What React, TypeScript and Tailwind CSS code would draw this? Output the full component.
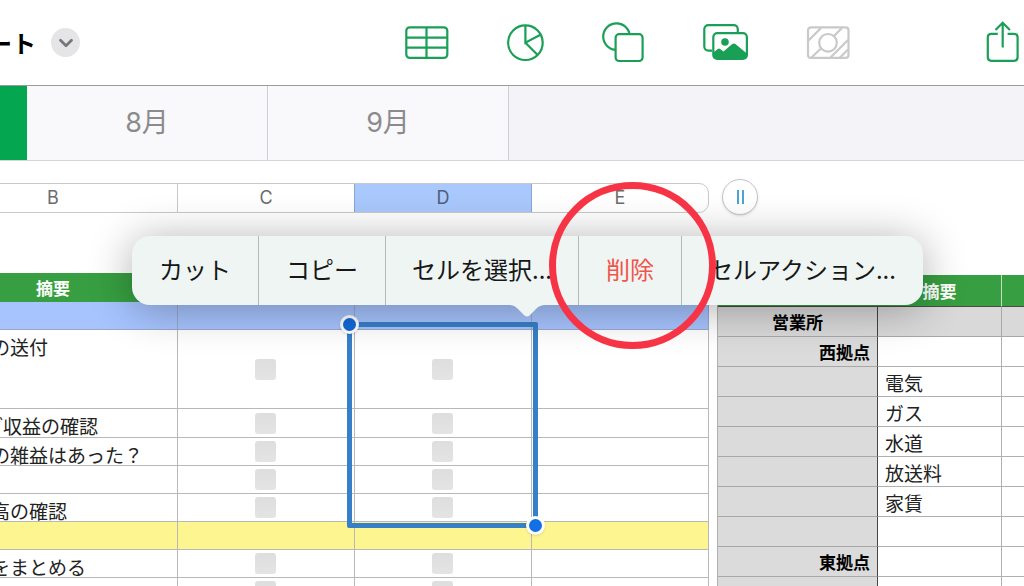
import {ChevronDown} from "lucide-react";
import type {ReactNode} from "react";

const tasks = [
  {text: "の送付", check: true, height: "h-[79px]", pad: "pl-[63px]"},
  {text: "ブ収益の確認", check: true, height: "h-[29px]", pad: "pl-14"},
  {text: "の雑益はあった？", check: true, height: "h-7", pad: "pl-[63px]"},
  {text: "", check: true, height: "h-7", pad: "pl-[63px]"},
  {text: "高の確認", check: true, height: "h-7", pad: "pl-[63px]"},
  {text: "", check: false, height: "h-7", pad: "pl-[63px]"},
  {text: "をまとめる", check: true, height: "h-7", pad: "pl-[63px]"},
  {text: "", check: true, height: "h-7", pad: "pl-[63px]"},
];

const expenses = [
  {place: "西拠点", item: ""},
  {place: "", item: "電気"},
  {place: "", item: "ガス"},
  {place: "", item: "水道"},
  {place: "", item: "放送料"},
  {place: "", item: "家賃"},
  {place: "", item: ""},
  {place: "東拠点", item: ""},
  {place: "", item: ""},
];

const menuItems = [
  {label: "カット", style: "w-[127px] border-r text-[#161818]"},
  {label: "コピー", style: "w-[127px] border-r text-[#161818]"},
  {label: "セルを選択...", style: "w-[193px] border-r text-[#161818]"},
  {label: "削除", style: "w-[103px] border-r text-[#f0544b]"},
  {label: "セルアクション...", style: "w-[241px] text-[#161818]"},
];

const ToolButton = ({label, children}: {label: string; children: ReactNode}) => (
  <button type="button" aria-label={label} className="flex w-[100px] justify-center text-[#1a9f57]">
    <svg width="50" height="49" viewBox="0 0 50 49" fill="none" stroke="currentColor" strokeWidth="2.2">
      {children}
    </svg>
  </button>
);

const Toolbar = () => (
  <header className="flex h-[85px] shrink-0 items-center">
    <div className="flex w-[376px] shrink-0 items-center gap-[15px]">
      <div className="flex w-9 justify-end overflow-hidden">
        <h1 className="shrink-0 text-2xl font-bold text-black">ート</h1>
      </div>
      <button
        type="button"
        aria-label="書類オプション"
        className="flex size-[29px] items-center justify-center rounded-full bg-[#e5e5e8] text-[#77777b]"
      >
        <ChevronDown size={22} strokeWidth={3} />
      </button>
    </div>
    <nav className="flex">
      <ToolButton label="表">
        <rect x="5.3" y="9.3" width="41" height="30.6" rx="3.5" />
        <path d="M25.5 9.3v30.6M5.3 19.6h41M5.3 29.7h41" />
      </ToolButton>
      <ToolButton label="グラフ">
        <circle cx="24.4" cy="24.7" r="17.3" />
        <path d="M24.4 7.4v17.3l15-8M24.4 24.7l12 12" />
      </ToolButton>
      <ToolButton label="図形">
        <circle cx="15.5" cy="18.6" r="13.3" />
        <rect x="14.6" y="16.2" width="27" height="26.8" rx="3.5" fill="white" />
      </ToolButton>
      <ToolButton label="メディア">
        <rect x="3.3" y="7.2" width="33.5" height="25.4" rx="4" />
        <rect x="11" y="14" width="37" height="30" rx="5" fill="white" stroke="none" />
        <rect x="12.3" y="15.2" width="33.6" height="25.8" rx="4" />
        <circle cx="24" cy="24" r="3.8" fill="currentColor" stroke="none" />
        <path
          d="M12.3 34.5l4.5-3.6q1.2-1 2.4 0l3.3 2.6 8.7-7.4q1.6-1.4 3.2 0l11.5 9.4v2.5q0 3-3 3H15.3q-3 0-3-3z"
          fill="currentColor"
          stroke="none"
        />
      </ToolButton>
      <ToolButton label="プレースホルダ">
        <g stroke="#c9c9cc">
          <rect x="7" y="9.3" width="40.5" height="30.6" rx="3" />
          <circle cx="27" cy="24.8" r="8.8" />
          <path d="M7.5 22.500L20 10M10.500 39.500l10-9.500M33 18l8-8M29.500 39.500L47 22M39 39.500l8-8" />
        </g>
      </ToolButton>
    </nav>
    <button type="button" aria-label="共有" className="ml-auto text-[#1a9f57]">
      <svg width="44" height="49" viewBox="0 0 44 49" fill="none" stroke="currentColor" strokeWidth="2.2">
        <path d="M17.8 15.8h-6.500q-3.500 0-3.500 3.500v20q0 3.500 3.500 3.500h22.800q3.500 0 3.500-3.500v-20q0-3.500-3.500-3.500h-6.500" />
        <path d="M22.7 29.5V4.8M15.5 12l7.200-7.200 7.200 7.200" />
      </svg>
    </button>
  </header>
);

const SheetTabs = () => (
  <div className="flex h-[76px] shrink-0 border-y border-t-[#9b9b9d] border-b-[#d4d4d6] bg-[#f4f4f8] font-[Inter,'Noto_Sans_CJK_JP',sans-serif] text-[27px] text-[#8b8b8d]">
    <button type="button" aria-label="7月" className="w-[27px] bg-[#04a650]" />
    <button type="button" className="w-[241px] border-r border-[#cfcfd3] bg-[#f9f9fb]">
      8月
    </button>
    <button type="button" className="w-[241px] border-r border-[#cfcfd3] bg-[#f9f9fb]">
      9月
    </button>
  </div>
);

const ColumnBar = () => (
  <div className="-ml-[72px] flex items-center gap-[13px]">
    <div className="flex h-[30px] w-[781px] shrink-0 overflow-hidden rounded-r-[10px] border border-[#c9c9c9] bg-white font-[Inter,sans-serif] text-lg leading-7 text-[#6c6c6e]">
      <div className="flex w-[249px] items-center justify-center border-r border-[#c9c9c9]">B</div>
      <div className="flex w-44 items-center justify-center">C</div>
      <div className="flex w-[178px] items-center justify-center border-x border-[#86a5d8] bg-[#a9c8fb] text-[#4f6078]">
        D
      </div>
      <div className="flex flex-1 items-center justify-center">E</div>
    </div>
    <button
      type="button"
      aria-label="列を追加"
      className="mb-[2px] flex size-9 shrink-0 items-center justify-center gap-[3px] rounded-full border border-[#c4c4c4] bg-white shadow-sm"
    >
      <span className="h-[14px] w-[2px] bg-[#4ba3d8]" />
      <span className="h-[14px] w-[2px] bg-[#4ba3d8]" />
    </button>
  </div>
);

const CheckCell = ({label, show}: {label: string; show: boolean}) => (
  <td className="border-r border-b border-[#b8b8b8] py-0 pr-[2px] pl-0">
    {show && (
      <input
        type="checkbox"
        aria-label={label}
        className="mx-auto block size-[21px] appearance-none rounded-[3px] bg-linear-to-b from-[#dedede] to-[#e4e4e4]"
      />
    )}
  </td>
);

const TaskTable = () => (
  <table className="-ml-[72px] w-[781px] shrink-0 table-fixed border-separate border-spacing-0 text-[19px] leading-[18px] text-[#222]">
    <colgroup>
      <col className="w-[250px]" />
      <col className="w-[177px]" />
      <col className="w-[177px]" />
      <col className="w-[177px]" />
    </colgroup>
    <thead>
      <tr className="h-[29px] bg-[#379f41] text-[17px] text-white">
        <th className="p-0">摘要</th>
        <th className="p-0" />
        <th className="p-0" />
        <th className="p-0" />
      </tr>
    </thead>
    <tbody>
      <tr className="h-7 bg-[#a7c4ff]">
        <td className="border-r border-b border-[#98a8cc] p-0" />
        <td className="border-r border-b border-[#98a8cc] p-0" />
        <td className="border-r border-b border-[#98a8cc] p-0" />
        <td className="border-r border-b border-[#98a8cc] p-0" />
      </tr>
      {tasks.map((task, i) => (
        <tr key={i} className={`${task.height} ${task.check ? "bg-white" : "bg-[#fdf690]"}`}>
          <td className={`border-r border-b border-[#b8b8b8] pt-2 pr-0 pb-0 align-top whitespace-nowrap ${task.pad}`}>
            {task.text}
          </td>
          <CheckCell label={`C${i + 3}`} show={task.check} />
          <CheckCell label={`D${i + 3}`} show={task.check} />
          <td className="border-r border-b border-[#b8b8b8] p-0" />
        </tr>
      ))}
    </tbody>
  </table>
);

const ExpenseTable = () => (
  <div className="mt-[2px] min-w-0 flex-1">
    <table className="w-full table-fixed border-separate border-spacing-0 border-l border-[#b0b0b0] text-[19px] leading-[18px] text-[#222]">
      <colgroup>
        <col className="w-40" />
        <col className="w-[124px]" />
        <col />
      </colgroup>
      <thead>
        <tr className="h-8 bg-[#379f41] text-[17px] text-white">
          <th className="border-b border-[#4a4a4a] p-0" />
          <th className="border-r border-b border-r-[#c4dfc6] border-b-[#4a4a4a] p-0">摘要</th>
          <th className="border-b border-[#4a4a4a] p-0" />
        </tr>
      </thead>
      <tbody>
        <tr className="h-[30px] bg-[#d9d9d9] text-[17px] text-black">
          <th className="border-r border-b border-r-[#444] border-b-[#a8a8a8] p-0">営業所</th>
          <td className="border-r border-b border-[#a8a8a8] p-0" />
          <td className="border-b border-[#a8a8a8] p-0" />
        </tr>
        {expenses.map((row, i) => (
          <tr key={i} className="h-[30px] bg-white">
            <th className="border-r border-b border-r-[#444] border-b-[#a8a8a8] bg-[#dbdbdb] py-0 pr-[7px] pl-0 text-right text-[17px] text-black">
              {row.place}
            </th>
            <td className="border-r border-b border-[#b0b0b0] pt-[2px] pr-0 pb-0 pl-[7px]">{row.item}</td>
            <td className="border-b border-[#b0b0b0] p-0" />
          </tr>
        ))}
      </tbody>
    </table>
  </div>
);

// range from the first handle (top left) to the last one (bottom right)
const Selection = () => (
  <div className="pointer-events-none absolute top-[161px] left-[347px] h-[206px] w-[191px] rounded-[2px] border-[5px] border-[#377fc8]">
    <span className="absolute -top-3 -left-3 size-[19px] rounded-full border-[3px] border-white bg-[#1369d8] shadow" />
    <span className="absolute -right-3 -bottom-3 size-[19px] rounded-full border-[3px] border-white bg-[#1370e4] shadow" />
  </div>
);

const ContextMenu = () => (
  <div className="absolute top-[75px] left-[132px] flex h-[69px] rounded-[18px] bg-[#eff5f2] shadow-[0_4px_44px_rgba(0,0,0,0.32)]">
    {menuItems.map((item) => (
      <button key={item.label} type="button" className={`border-[#b4bab7] pb-[3px] text-2xl whitespace-nowrap ${item.style}`}>
        {item.label}
      </button>
    ))}
    <svg className="absolute top-[68px] left-[375px]" width="40" height="14" viewBox="0 0 40 14" fill="#eff5f2">
      <path d="M0 0h40v1c-6 0-8 1-11 4l-6.500 6.500q-2.500 2-5 0L11 5C8 2 6 1 0 1z" />
    </svg>
  </div>
);

const App = () => {
  return (
    <div className="flex h-screen flex-col overflow-hidden bg-white font-['Noto_Sans_CJK_JP',sans-serif]">
      <Toolbar />
      <SheetTabs />
      <main className="relative flex-1 overflow-hidden pt-[18px]">
        <ColumnBar />
        <div className="mt-14 flex items-start gap-2">
          <TaskTable />
          <ExpenseTable />
        </div>
        <Selection />
        <ContextMenu />
        <div className="pointer-events-none absolute top-[21px] left-[549px] size-[167px] rounded-full border-[7px] border-[#f73446]" />
      </main>
    </div>
  );
};

export default App;
